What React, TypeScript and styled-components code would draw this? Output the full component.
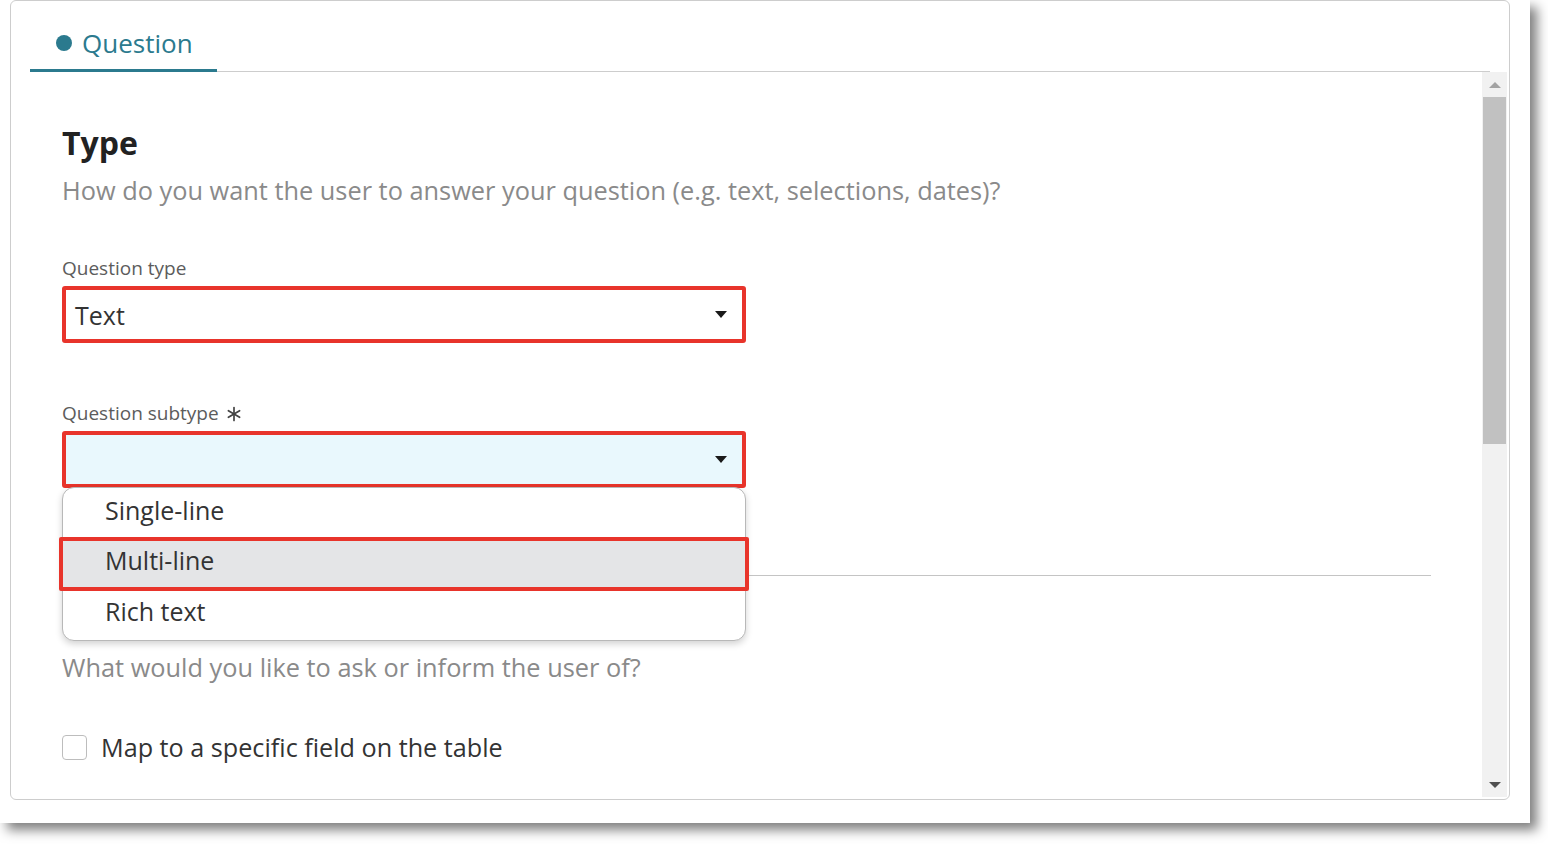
import React from "react";
import styled, { createGlobalStyle } from "styled-components";

const Global = createGlobalStyle`
  html, body { margin: 0; padding: 0; background: #ffffff; }
  body { font-family: "Open Sans", "Noto Sans", Arial, sans-serif; }
  * { box-sizing: border-box; }
`;

const TEAL = "#2b7a8e";
const RED = "#e8342b";

const Page = styled.div`
  width: 1548px;
  height: 844px;
  overflow: hidden;
  background: #ffffff;
`;

const Frame = styled.div`
  width: 1530px;
  height: 823px;
  background: #ffffff;
  box-shadow: 7px 7px 11px rgba(0, 0, 0, 0.5);
  padding-left: 10px;
`;

const Panel = styled.div`
  width: 1500px;
  height: 800px;
  border: 1px solid #cdcdcd;
  border-radius: 6px;
  display: flex;
  flex-direction: column;
  overflow: hidden;
  background: #ffffff;
`;

const TabBar = styled.div`
  display: flex;
  height: 71px;
  margin: 0 19px;
  border-bottom: 1px solid #cdcdcd;
  flex-shrink: 0;
`;

const Tab = styled.div`
  width: 187px;
  height: 71px;
  margin-bottom: -1px;
  padding: 25px 0 0 26px;
  display: flex;
  align-items: flex-start;
  gap: 10px;
  border-bottom: 3px solid ${TEAL};
  color: ${TEAL};
  font-size: 26px;
  line-height: 34px;
  font-weight: 500;
`;

const Dot = styled.span`
  width: 16px;
  height: 16px;
  border-radius: 50%;
  background: ${TEAL};
  margin-top: 9px;
  flex-shrink: 0;
`;

const Body = styled.div`
  flex: 1;
  display: flex;
  min-height: 0;
`;

const Content = styled.div`
  flex: 1;
  padding: 50px 51px 0 51px;
  display: flex;
  flex-direction: column;
  overflow: hidden;
`;

const Heading = styled.h2`
  margin: 0;
  font-size: 32px;
  line-height: 42px;
  font-weight: 700;
  color: #222222;
`;

const Subtitle = styled.p<{ $mt: number }>`
  margin: ${(p) => p.$mt}px 0 0 0;
  font-size: 25.35px;
  line-height: 34px;
  color: #8a8a8a;
`;

const Field = styled.div<{ $mt: number }>`
  margin-top: ${(p) => p.$mt}px;
  width: 684px;
  display: flex;
  flex-direction: column;
  gap: 5px;
  position: relative;
`;

const Label = styled.label`
  font-size: 19px;
  line-height: 25px;
  color: #5c5c5c;
  display: flex;
  align-items: center;
  gap: 7px;
`;

const SelectBox = styled.div<{ $active?: boolean }>`
  height: 57px;
  border: 4px solid ${RED};
  border-radius: 3px;
  background: ${(p) => (p.$active ? "#e9f8fd" : "#ffffff")};
  padding: 0 15px 0 9px;
  display: flex;
  align-items: center;
  justify-content: space-between;
  font-size: 25px;
  color: #333333;
`;

const Caret = styled.span`
  width: 0;
  height: 0;
  border-left: 6px solid transparent;
  border-right: 6px solid transparent;
  border-top: 7px solid #1a1a1a;
  margin-left: auto;
`;

const Menu = styled.div`
  position: absolute;
  left: 0;
  right: 0;
  top: calc(100% - 1px);
  background: #ffffff;
  border: 1px solid #b8b8b8;
  border-radius: 12px;
  box-shadow: 0 3px 7px rgba(0, 0, 0, 0.18);
  display: flex;
  flex-direction: column;
  z-index: 2;
`;

const MenuItem = styled.div<{ $selected?: boolean }>`
  height: ${(p) => (p.$selected ? 54 : 51)}px;
  margin: ${(p) => (p.$selected ? "-2px -4px" : "0")};
  border: ${(p) => (p.$selected ? `4px solid ${RED}` : "none")};
  border-radius: ${(p) => (p.$selected ? "2px" : "0")};
  background: ${(p) => (p.$selected ? "#e4e5e7" : "transparent")};
  padding: 0 0 8px 42px;
  display: flex;
  align-items: center;
  font-size: 25px;
  color: #333333;
  position: relative;
`;

const Divider = styled.div`
  margin-top: 87px;
  height: 1px;
  background: #c4c4c4;
  flex-shrink: 0;
`;

const CheckRow = styled.div`
  margin-top: 46px;
  display: flex;
  align-items: center;
  gap: 14px;
  height: 34px;
  font-size: 25.2px;
  color: #333333;
`;

const CheckBox = styled.span`
  width: 25px;
  height: 25px;
  border: 1.5px solid #bdbdbd;
  border-radius: 4px;
  background: #ffffff;
  flex-shrink: 0;
`;

const Scrollbar = styled.div`
  width: 25px;
  margin: 0 2px 2px 0;
  background: #f1f1f1;
  display: flex;
  flex-direction: column;
  align-items: center;
`;

const ScrollButton = styled.div`
  height: 25px;
  width: 100%;
  display: flex;
  align-items: center;
  justify-content: center;
  flex-shrink: 0;
`;

const ArrowUp = styled.span`
  width: 0;
  height: 0;
  border-left: 6px solid transparent;
  border-right: 6px solid transparent;
  border-bottom: 6px solid #a3a3a3;
`;

const ArrowDown = styled.span`
  width: 0;
  height: 0;
  border-left: 6px solid transparent;
  border-right: 6px solid transparent;
  border-top: 6px solid #505050;
`;

const Thumb = styled.div`
  width: 23px;
  height: 347px;
  background: #c1c1c1;
  flex-shrink: 0;
`;

const Track = styled.div`
  flex: 1;
`;

const Asterisk = () => (
  <svg width="16" height="16" viewBox="0 0 16 16" aria-hidden="true">
    <g stroke="#444" strokeWidth="1.7" strokeLinecap="round">
      <line x1="8" y1="1.5" x2="8" y2="14.5" />
      <line x1="2.4" y1="4.7" x2="13.6" y2="11.3" />
      <line x1="2.4" y1="11.3" x2="13.6" y2="4.7" />
    </g>
  </svg>
);

export default function App() {
  return (
    <>
      <Global />
      <Page>
        <Frame>
          <Panel>
            <TabBar>
              <Tab>
                <Dot />
                Question
              </Tab>
            </TabBar>
            <Body>
              <Content>
                <Heading>Type</Heading>
                <Subtitle $mt={9}>
                  How do you want the user to answer your question (e.g. text, selections, dates)?
                </Subtitle>
                <Field $mt={49}>
                  <Label>Question type</Label>
                  <SelectBox>
                    Text
                    <Caret />
                  </SelectBox>
                </Field>
                <Field $mt={58}>
                  <Label>
                    Question subtype <Asterisk />
                  </Label>
                  <SelectBox $active>
                    <Caret />
                  </SelectBox>
                  <Menu>
                    <MenuItem>Single-line</MenuItem>
                    <MenuItem $selected>Multi-line</MenuItem>
                    <MenuItem>Rich text</MenuItem>
                  </Menu>
                </Field>
                <Divider />
                <Subtitle $mt={74}>What would you like to ask or inform the user of?</Subtitle>
                <CheckRow>
                  <CheckBox />
                  Map to a specific field on the table
                </CheckRow>
              </Content>
              <Scrollbar>
                <ScrollButton>
                  <ArrowUp />
                </ScrollButton>
                <Thumb />
                <Track />
                <ScrollButton>
                  <ArrowDown />
                </ScrollButton>
              </Scrollbar>
            </Body>
          </Panel>
        </Frame>
      </Page>
    </>
  );
}
